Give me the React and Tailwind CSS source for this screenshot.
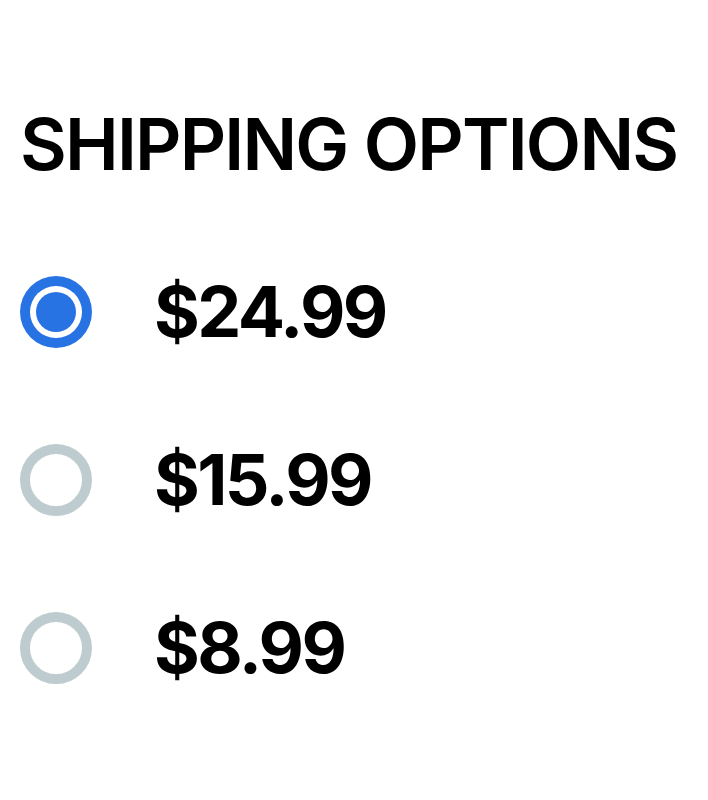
import React, { useState } from 'react';

const options = ['$24.99', '$15.99', '$8.99'];

function Radio({ checked }) {
  if (checked) {
    return (
      <span className="flex h-[72px] w-[72px] shrink-0 items-center justify-center rounded-full bg-[#2873e3]">
        <span className="flex h-[52px] w-[52px] items-center justify-center rounded-full bg-white">
          <span className="h-[40px] w-[40px] rounded-full bg-[#2873e3]" />
        </span>
      </span>
    );
  }
  return <span className="h-[72px] w-[72px] shrink-0 rounded-full border-[10px] border-[#bfcccf]" />;
}

export default function App() {
  const [selected, setSelected] = useState(0);

  return (
    <div className="min-h-screen bg-white px-5 pt-[108px] text-black" style={{ fontFamily: 'Inter, sans-serif' }}>
      <h1 className="whitespace-nowrap text-[72px] font-semibold leading-none tracking-[-1.8px]">SHIPPING OPTIONS</h1>

      <div className="mt-[96px] flex flex-col gap-[96px]">
        {options.map((price, i) => (
          <button key={price} onClick={() => setSelected(i)} className="flex items-center gap-[62px] text-left">
            <Radio checked={selected === i} />
            <span className="whitespace-nowrap text-[70px] font-bold leading-none tracking-[-2.6px]">{price}</span>
          </button>
        ))}
      </div>
    </div>
  );
}
